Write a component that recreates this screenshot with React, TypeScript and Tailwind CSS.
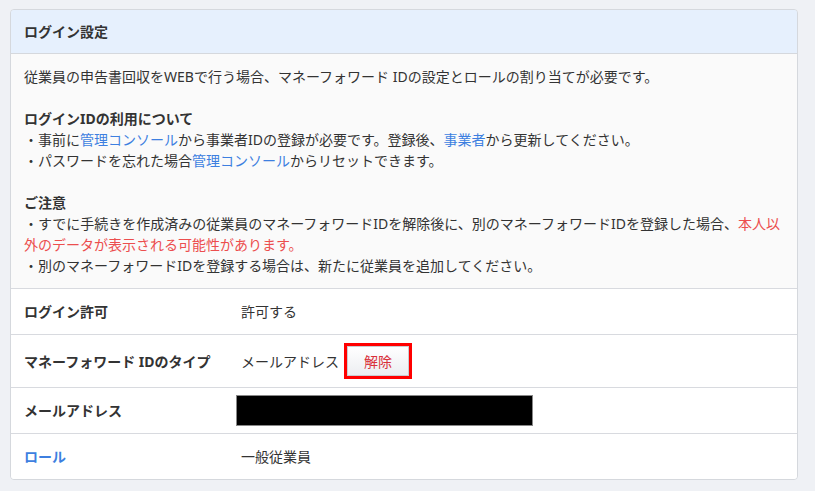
import React from 'react';

const Row: React.FC<{ label: React.ReactNode; children: React.ReactNode; tall?: boolean }> = ({ label, children, tall }) => (
  <div className={`flex items-center border-t border-[#d8dadf] bg-white ${tall ? 'h-[53px]' : 'h-[46px]'}`}>
    <div className="w-[230px] shrink-0 pl-[13px] font-bold">{label}</div>
    <div className="flex items-center">{children}</div>
  </div>
);

const Link: React.FC<{ children: React.ReactNode }> = ({ children }) => (
  <span className="text-[#3d7fe0]">{children}</span>
);

export default function App() {
  return (
    <div
      className="min-h-[491px] bg-[#eff1f5] pt-[9px] pl-[10px] pr-[17px] text-[14px] leading-[21px] text-[#333]"
      style={{ fontFamily: '"Noto Sans", "Noto Sans CJK JP", sans-serif' }}
    >
      <div className="overflow-hidden rounded-[4px] border border-[#d5d8dd]">
        <div className="flex h-[44px] items-center border-b border-[#d5d8dd] bg-[#e6f0fd] pl-[13px] font-bold">
          ログイン設定
        </div>
        <div className="bg-[#fafafa] px-[13px] pt-[12px] pb-[12px]">
          <p>従業員の申告書回収をWEBで行う場合、マネーフォワード IDの設定とロールの割り当てが必要です。</p>
          <p className="mt-[21px] font-bold">ログインIDの利用について</p>
          <p>
            ・事前に<Link>管理コンソール</Link>から事業者IDの登録が必要です。登録後、<Link>事業者</Link>から更新してください。
          </p>
          <p>
            ・パスワードを忘れた場合<Link>管理コンソール</Link>からリセットできます。
          </p>
          <p className="mt-[21px] font-bold">ご注意</p>
          <p>
            ・すでに手続きを作成済みの従業員のマネーフォワードIDを解除後に、別のマネーフォワードIDを登録した場合、
            <span className="text-[#ec4e4e]">本人以外のデータが表示される可能性があります。</span>
          </p>
          <p>・別のマネーフォワードIDを登録する場合は、新たに従業員を追加してください。</p>
        </div>
        <Row label="ログイン許可">許可する</Row>
        <Row label="マネーフォワード IDのタイプ" tall>
          <span>メールアドレス</span>
          <span className="ml-[5px] border-[3px] border-[#ff0000] p-0">
            <button className="flex h-[30px] w-[62px] items-center justify-center border border-[#c9ccd1] bg-gradient-to-b from-white to-[#eceef1] text-[#d9303a]">
              解除
            </button>
          </span>
        </Row>
        <Row label="メールアドレス">
          <div className="-ml-[5px] h-[31px] w-[297px] border border-[#888] bg-black" />
        </Row>
        <Row label={<span className="text-[#3d7fe0]">ロール</span>}>一般従業員</Row>
      </div>
    </div>
  );
}
